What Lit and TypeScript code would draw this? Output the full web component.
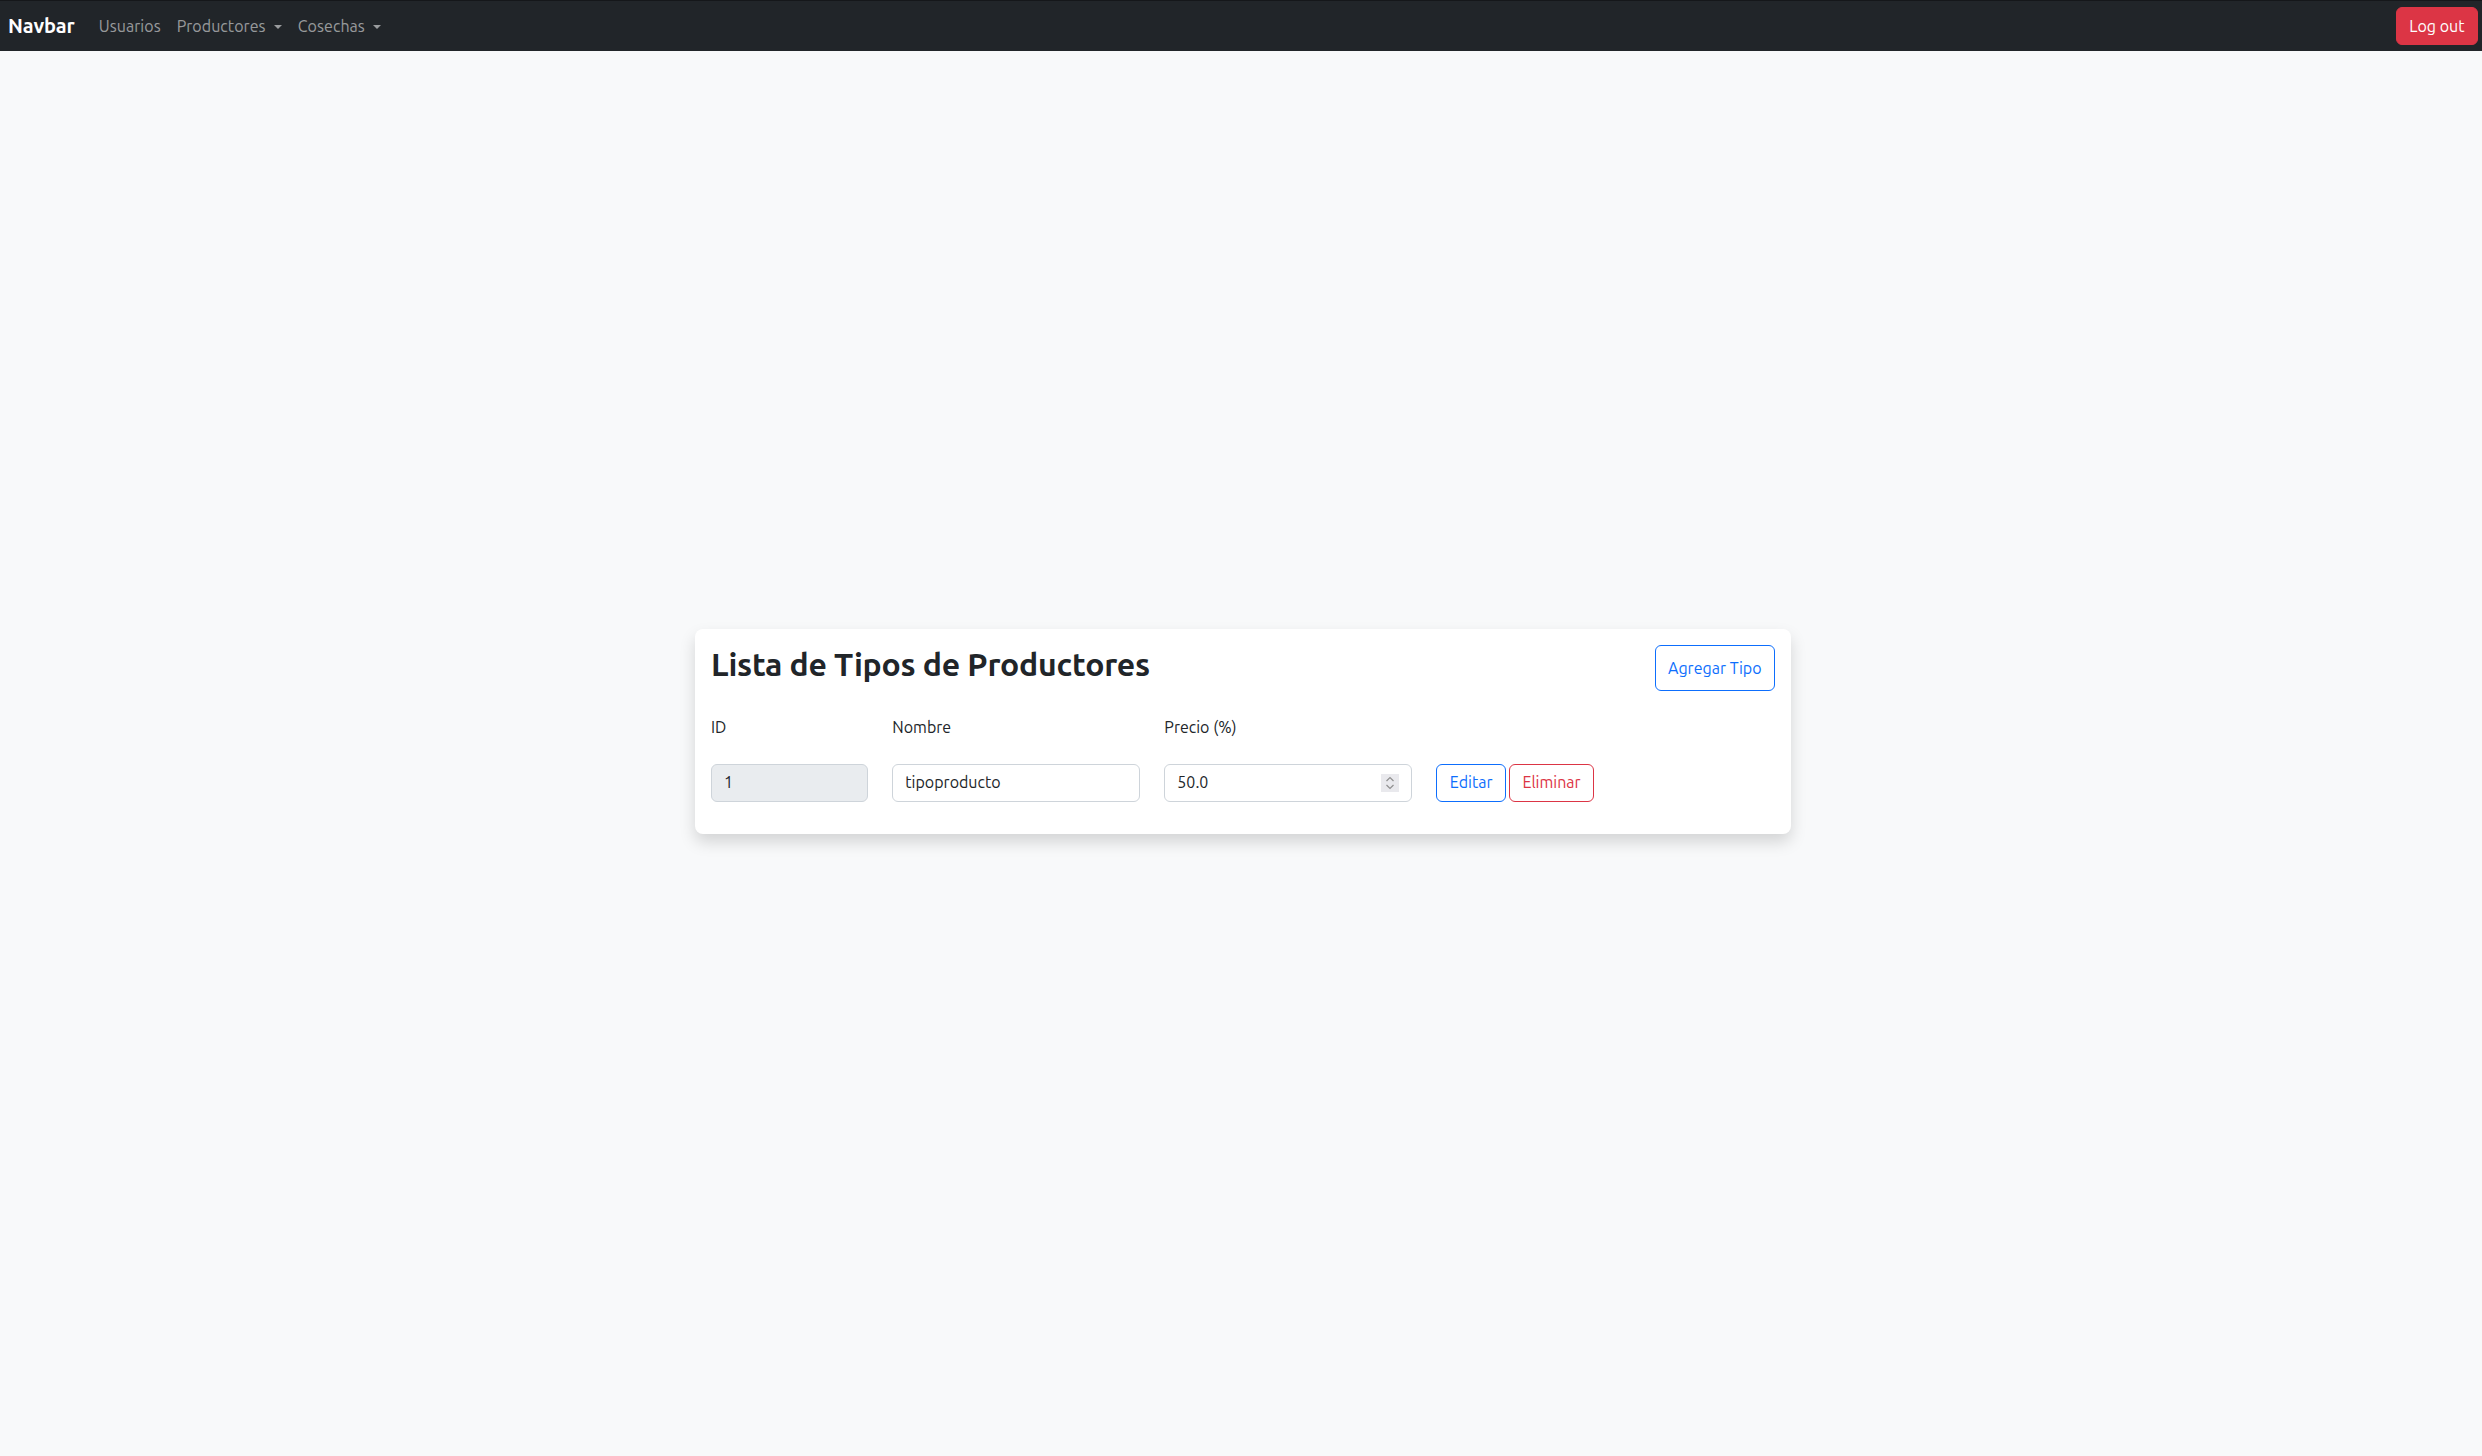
import { LitElement, html, css } from "lit";
import { customElement } from "lit/decorators.js";

@customElement("app-root")
export class AppRoot extends LitElement {
  static styles = css`
    :host {
      display: block;
      min-height: 1456px;
      background: #f8f9fa;
      font-family: Ubuntu, "Noto Sans", "Open Sans", sans-serif;
      font-size: 16px;
      line-height: 1.5;
      color: #212529;
      box-sizing: border-box;
    }
    * { box-sizing: border-box; }
    .nav {
      height: 51px;
      background: #212529;
      border-top: 1px solid #15171a;
      display: flex;
      align-items: center;
      padding: 0 4px 0 8px;
    }
    .brand { color: #fff; font-size: 20px; font-weight: 600; margin-right: 16px; letter-spacing: -.1px; }
    .link { color: rgba(255,255,255,.55); padding: 8px; white-space: nowrap; letter-spacing: .05px; }
    .caret {
      display: inline-block; margin-left: 4.5px; vertical-align: 3px;
      border-top: 4.8px solid; border-left: 4.8px solid transparent; border-right: 4.8px solid transparent;
    }
    .spacer { flex: 1; }
    .btn {
      font: inherit; line-height: 1.5; padding: 6px 12.5px; border-radius: 6px; border: 1px solid; background: transparent; white-space: nowrap;
    }
    .danger { background: #dc3545; border-color: #dc3545; color: #fff; }
    .out-primary { color: #0d6efd; border-color: #0d6efd; }
    .out-danger { color: #dc3545; border-color: #dc3545; }
    .main { padding: 578px 0 0 695px; }
    .card {
      width: 1096px; background: #fff; border-radius: 8px; padding: 16px;
      box-shadow: 0 8px 16px rgba(0,0,0,.15);
    }
    .head { display: flex; justify-content: space-between; }
    h2 { margin: 0 0 8px; font-size: 32px; font-weight: 600; line-height: 1.2; letter-spacing: -.22px; }
    .grid { display: grid; grid-template-columns: repeat(12, 1fr); column-gap: 24px; }
    .c2 { grid-column: span 2; }
    .c3 { grid-column: span 3; }
    .c4 { grid-column: span 4; }
    .labels { height: 72.6px; padding-bottom: 1px; align-items: center; }
    .row { margin-bottom: 16px; }
    input {
      display: block; width: 100%; height: 38px; padding: 5px 12px 7px; font: inherit; color: #212529;
      background: #fff; border: 1px solid #ced4da; border-radius: 6px; outline: none;
    }
    input[readonly] { background: #e9ecef; }
    input::-webkit-inner-spin-button { -webkit-appearance: none; margin: 0; }
    .num { position: relative; }
    .spin { position: absolute; top: 10px; right: 13px; width: 18px; height: 18px; display: block; }
    .actions { display: flex; gap: 3px; }
    .actions .btn { padding-top: 5px; padding-bottom: 7px; }
  `;

  render() {
    return html`
      <nav class="nav">
        <a class="brand">Navbar</a>
        <a class="link">Usuarios</a>
        <a class="link">Productores <span class="caret"></span></a>
        <a class="link">Cosechas <span class="caret"></span></a>
        <div class="spacer"></div>
        <button class="btn danger">Log out</button>
      </nav>
      <main class="main">
        <section class="card">
          <div class="head">
            <h2>Lista de Tipos de Productores</h2>
            <button class="btn out-primary">Agregar Tipo</button>
          </div>
          <div class="grid labels">
            <label class="c2">ID</label>
            <label class="c3">Nombre</label>
            <label class="c3">Precio (%)</label>
          </div>
          <div class="grid row">
            <div class="c2"><input value="1" readonly /></div>
            <div class="c3"><input value="tipoproducto" /></div>
            <div class="c3 num">
              <input type="number" step="0.1" value="50.0" />
              <svg class="spin" viewBox="0 0 18 18" aria-hidden="true">
                <rect width="18" height="18" fill="#e9e9ed"></rect>
                <path d="M5.5 7 9 3.5 12.5 7M5.5 11 9 14.5 12.5 11" fill="none" stroke="#8f8f8f" stroke-width="1.2"></path>
              </svg>
            </div>
            <div class="c4 actions">
              <button class="btn out-primary">Editar</button>
              <button class="btn out-danger">Eliminar</button>
            </div>
          </div>
        </section>
      </main>
    `;
  }
}
